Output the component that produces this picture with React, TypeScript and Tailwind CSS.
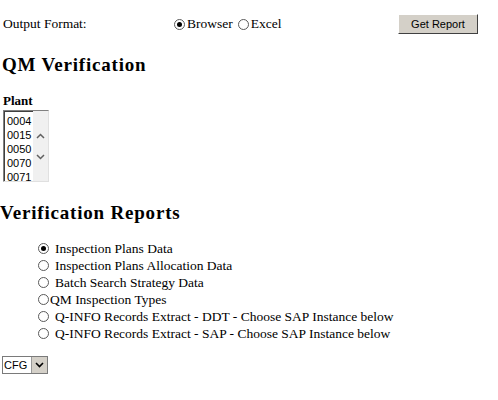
import React from "react";

function Radio({ checked }: { checked?: boolean }) {
  return (
    <span className="inline-flex w-[11px] h-[11px] rounded-full border border-[#5a5a5a] bg-white items-center justify-center shrink-0">
      {checked && <span className="w-[5px] h-[5px] rounded-full bg-black" />}
    </span>
  );
}

const REPORTS = [
  { label: "Inspection Plans Data", checked: true },
  { label: "Inspection Plans Allocation Data" },
  { label: "Batch Search Strategy Data" },
  { label: "QM Inspection Types", tight: true },
  { label: "Q-INFO Records Extract - DDT - Choose SAP Instance below" },
  { label: "Q-INFO Records Extract - SAP - Choose SAP Instance below" },
];

const PLANTS = ["0004", "0015", "0050", "0070", "0071"];

export default function App() {
  return (
    <div className="w-[498px] h-[400px] bg-white text-black font-['Liberation_Serif',serif] text-[13.5px] leading-none">
      <div className="flex items-center h-[22px] mt-[13px] pl-[3px]">
        <span className="w-[171px]">Output Format:</span>
        <span className="flex items-center gap-[1px]">
          <Radio checked />
          <span className="ml-[1px]">Browser</span>
        </span>
        <span className="flex items-center gap-[2px] ml-[5px]">
          <Radio />
          <span>Excel</span>
        </span>
        <button className="ml-auto mr-[20px] w-[80px] h-[20px] bg-[#d4d0c8] border border-t-white border-l-white border-b-[#404040] border-r-[#404040] font-['Liberation_Sans',sans-serif] text-[11px] text-black">
          Get Report
        </button>
      </div>

      <h1 className="mt-[20px] pl-[2px] text-[19px] font-bold tracking-[0.8px]">QM Verification</h1>

      <div className="mt-[20px] pl-[3px] font-bold text-[13px]">Plant</div>
      <div className="mt-[3px] ml-[3px] flex w-[46px] h-[72px] border border-t-[#808080] border-l-[#808080] border-b-[#e0e0e0] border-r-[#e0e0e0] bg-white font-['Liberation_Sans',sans-serif] text-[11px]">
        <div className="flex flex-col pl-[2px] pt-[2px] gap-0 border-l border-t border-[#404040] flex-1">
          {PLANTS.map((p) => (
            <div key={p} className="h-[14px] leading-[14px]">{p}</div>
          ))}
        </div>
        <div className="w-[15px] bg-[#f0f0f0] flex flex-col items-center justify-around py-[14px]">
          <svg width="9" height="6" viewBox="0 0 9 6"><path d="M1 5l3.5-3.5L8 5" fill="none" stroke="#606060" strokeWidth="1.5" /></svg>
          <svg width="9" height="6" viewBox="0 0 9 6"><path d="M1 1l3.5 3.5L8 1" fill="none" stroke="#606060" strokeWidth="1.5" /></svg>
        </div>
      </div>

      <h2 className="mt-[21px] text-[19px] font-bold tracking-[0.8px]">Verification Reports</h2>

      <ul className="mt-[18px] pl-[38px] flex flex-col">
        {REPORTS.map((r) => (
          <li key={r.label} className={`flex items-center h-[17px] ${r.tight ? "gap-[1px]" : "gap-[6px]"}`}>
            <Radio checked={r.checked} />
            <span>{r.label}</span>
          </li>
        ))}
      </ul>

      <div className="mt-[14px] ml-[2px] flex w-[46px] h-[18px] border border-[#7a7a7a] bg-white font-['Liberation_Sans',sans-serif] text-[11px]">
        <span className="flex-1 flex items-center pl-[1px]">CFG</span>
        <span className="w-[16px] bg-[#d4d0c8] border-l border-[#9a9a9a] flex items-center justify-center">
          <svg width="9" height="6" viewBox="0 0 9 6"><path d="M1 1l3.5 3.5L8 1" fill="none" stroke="#000" strokeWidth="1.6" /></svg>
        </span>
      </div>
    </div>
  );
}
